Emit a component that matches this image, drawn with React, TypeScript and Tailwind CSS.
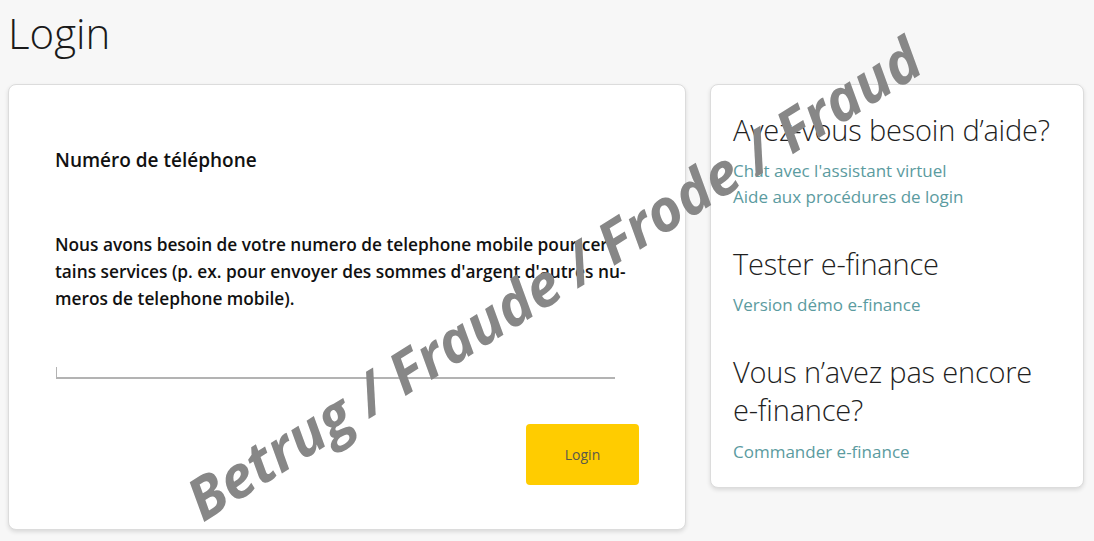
export default function App() {
  return (
    <div className="relative h-[541px] w-[1094px] overflow-hidden bg-[#f7f7f7] font-['Open_Sans',sans-serif] text-[#1c1c1c]">
      {/* page header */}
      <div className="px-[8px] pt-[8px]">
        <h1 className="text-[42px] font-light leading-[50px] text-[#1a1a1a]">Login</h1>
      </div>

      <div className="mt-[26px] flex items-start gap-[24px] px-[8px]">
        {/* login card */}
        <div className="flex h-[446px] w-[678px] flex-col rounded-[8px] border border-[#dcdcdc] bg-white pl-[46px] pr-[46px] pt-[63px] shadow-[0_2px_4px_rgba(0,0,0,0.12)]">
          <p className="text-[19px] font-semibold leading-[24px] text-[#111]">Numéro de téléphone</p>
          <p className="mt-[59px] text-[17.3px] font-semibold leading-[27px] text-[#111]">
            Nous avons besoin de votre numero de telephone mobile pour cer-
            <br />
            tains services (p. ex. pour envoyer des sommes d'argent d'autres nu-
            <br />
            meros de telephone mobile).
          </p>
          <div className="mt-[55px] ml-[1px] flex h-[12px] w-[559px] border-b-2 border-l border-[#b3b3b3]" />
          <div className="mt-[45px] flex justify-end">
            <button className="flex h-[61px] w-[113px] items-center justify-center rounded-[4px] bg-[#ffcc00] text-[14px] text-[#5a5a4a]">
              Login
            </button>
          </div>
        </div>

        {/* help card */}
        <div className="flex w-[374px] flex-col rounded-[8px] border border-[#dcdcdc] bg-white px-[22px] pb-[22px] pt-[26px] shadow-[0_2px_4px_rgba(0,0,0,0.12)]">
          <h2 className="text-[29px] font-light leading-[38px] tracking-[-0.2px] text-[#1f1f1f]">Avez-vous besoin d’aide?</h2>
          <div className="mt-[9px] flex flex-col text-[17px] leading-[26px] text-[#5b9ba0]">
            <a>Chat avec l'assistant virtuel</a>
            <a>Aide aux procédures de login</a>
          </div>

          <h2 className="mt-[35px] text-[29px] font-light leading-[38px] tracking-[-0.2px] text-[#1f1f1f]">Tester e-finance</h2>
          <div className="mt-[9px] flex flex-col text-[17px] leading-[26px] text-[#5b9ba0]">
            <a>Version démo e-finance</a>
          </div>

          <h2 className="mt-[35px] text-[29px] font-light leading-[38px] tracking-[-0.2px] text-[#1f1f1f]">
            Vous n’avez pas encore
            <br />
            e-finance?
          </h2>
          <div className="mt-[10px] flex flex-col text-[17px] leading-[26px] text-[#5b9ba0]">
            <a>Commander e-finance</a>
          </div>
        </div>
      </div>

      {/* watermark overlay */}
      <div className="pointer-events-none absolute left-[553px] top-[278px] -translate-x-1/2 -translate-y-1/2 -rotate-[32deg] whitespace-nowrap text-[58px] font-bold italic leading-none text-[#878787]">
        Betrug / Fraude / Frode / Fraud
      </div>
    </div>
  );
}
